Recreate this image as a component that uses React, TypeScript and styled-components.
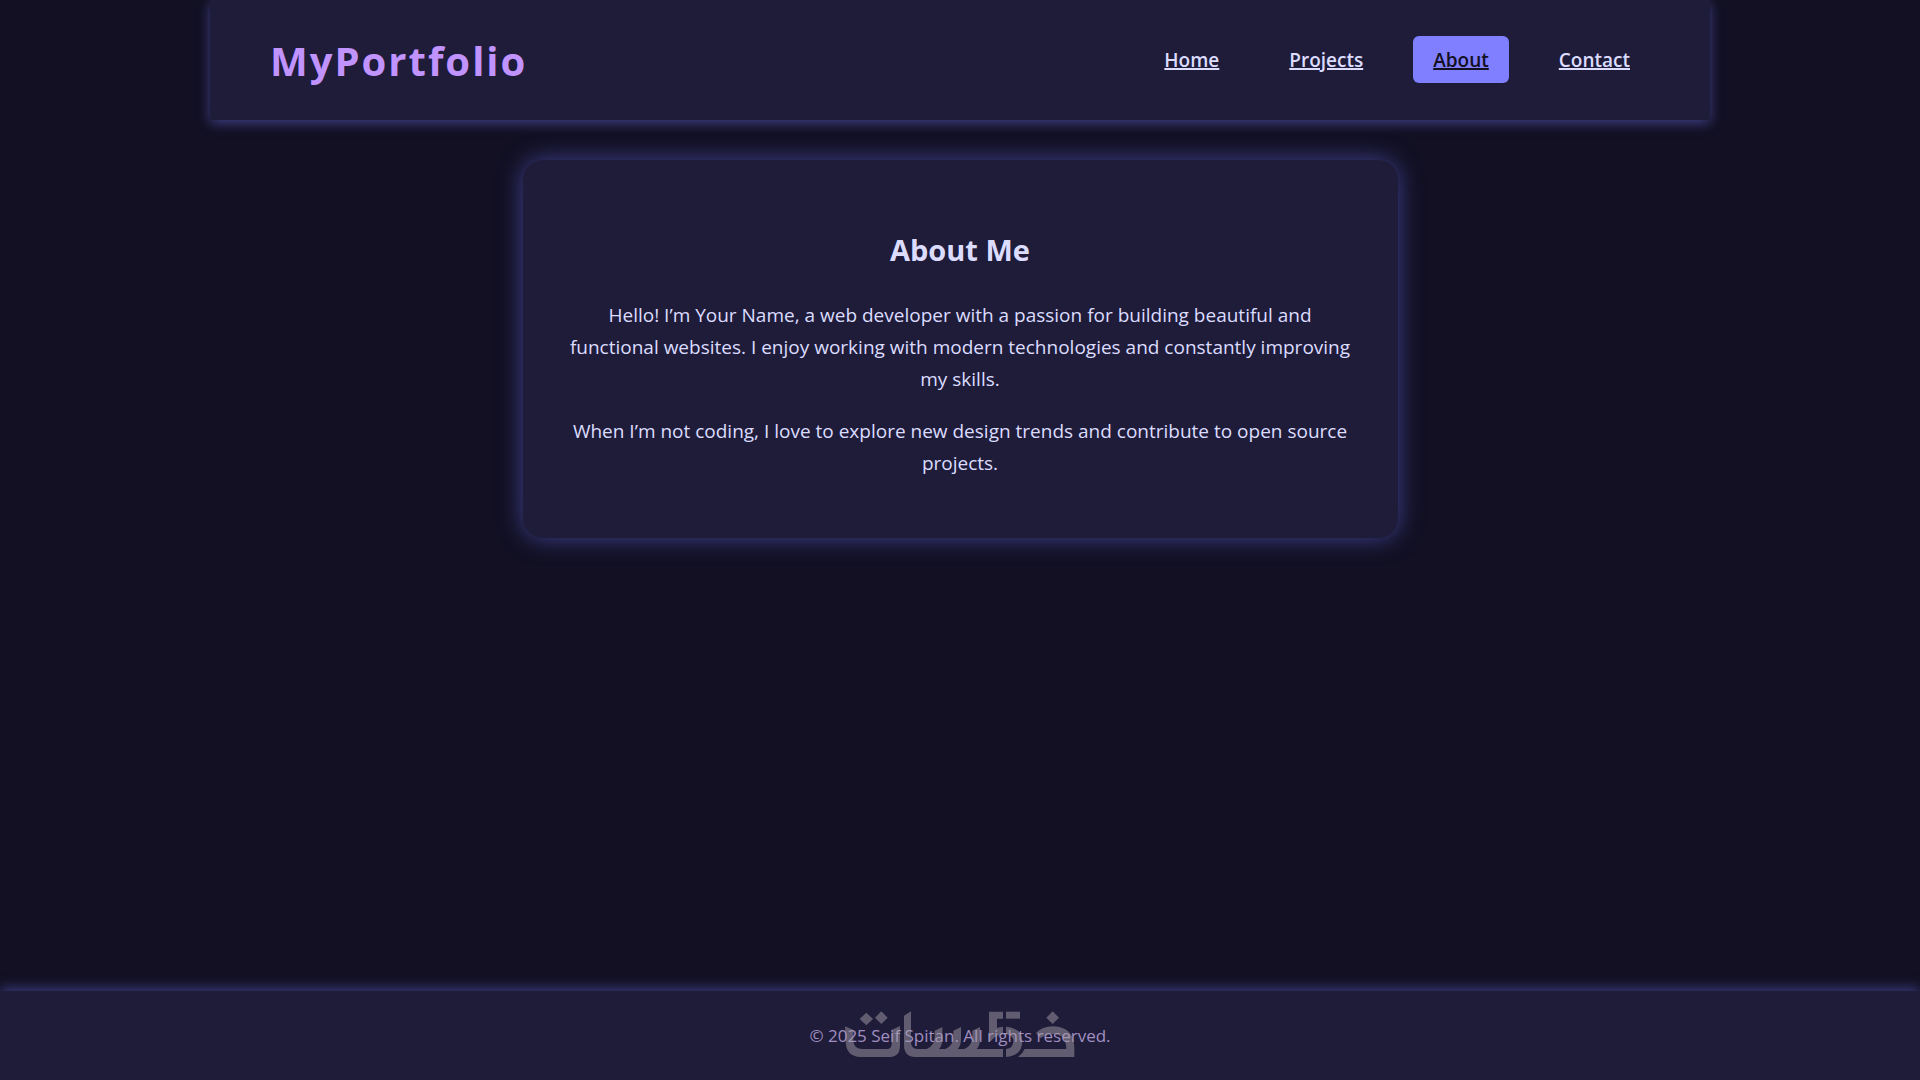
import React from "react";
import styled, { createGlobalStyle } from "styled-components";

const GlobalStyle = createGlobalStyle`
  *, *::before, *::after { box-sizing: border-box; }
  body {
    margin: 0;
    background: #121022;
    color: #dcdcff;
    font-family: "Open Sans", "Noto Sans", sans-serif;
  }
`;

const Page = styled.div`
  min-height: 100vh;
  display: flex;
  flex-direction: column;
  align-items: center;
`;

const Header = styled.header`
  width: 100%;
  max-width: 1500px;
  padding: 33px 60px 31px;
  display: flex;
  align-items: center;
  justify-content: space-between;
  background: #1f1c3a;
  box-shadow: 0 3px 12px rgba(120, 120, 255, 0.45);
`;

const Logo = styled.div`
  font-size: 40px;
  line-height: 56px;
  font-weight: 700;
  letter-spacing: 2px;
  color: #c093ff;
`;

const NavList = styled.ul`
  margin: 0 0 3px;
  padding: 0;
  display: flex;
  gap: 30px;
  list-style: none;
`;

const NavLink = styled.a<{ $active?: boolean }>`
  display: block;
  padding: 11px 20px 9px;
  border-radius: 6px;
  font-size: 19px;
  line-height: 27px;
  font-weight: 600;
  text-decoration-thickness: 2px;
  color: ${(p) => (p.$active ? "#121022" : "#dcdcff")};
  background: ${(p) => (p.$active ? "#7f7fff" : "transparent")};
`;

const Card = styled.main`
  width: calc(100% - 80px);
  max-width: 875px;
  margin: 40px 0;
  padding: 68px 40px 59px;
  border-radius: 20px;
  background: #1f1c3a;
  text-align: center;
  box-shadow: 0 0 25px rgba(112, 116, 255, 0.5);
`;

const Title = styled.h1`
  margin: 0 0 27px;
  font-size: 29px;
  line-height: 44px;
  font-weight: 700;
`;

const Paragraph = styled.p`
  margin: 0 0 20px;
  font-size: 19px;
  line-height: 32px;
  &:last-child { margin-bottom: 0; }
`;

const Footer = styled.footer`
  position: relative;
  width: 100%;
  margin-top: auto;
  padding: 32px 20px;
  background: #1f1c3a;
  color: #a08fc0;
  font-size: 17px;
  line-height: 25px;
  text-align: center;
  box-shadow: 0 -3px 12px rgba(120, 120, 255, 0.4);
`;

const Watermark = styled.svg`
  position: absolute;
  top: 20px;
  left: 50%;
  width: 232px;
  height: 47px;
  transform: translateX(-50%);
  fill: #a39ca6;
  opacity: 0.5;
  pointer-events: none;
`;

const links = ["Home", "Projects", "About", "Contact"];

function KhamsatMark() {
  return (
    <Watermark viewBox="162 124 696 141" aria-hidden="true">
      <path d="M229 129l20 19-20 19-20-19z" />
      <path d="M274 125l19 19-19 19-19-19z" />
      <path d="M165 170L190 181V210Q190 238 218 238H290Q305 238 305 222V181L330 169V228Q330 262 296 262H212Q167 262 167 212Z" />
      <path d="M342 138L363 125V218Q363 238 382 238H410Q434 228 434 202V183L457 172V208Q457 228 447 238H466Q490 228 490 202V183L513 172V208Q513 228 503 238H523Q547 228 547 202V183L570 172V208Q570 228 560 238H639V262H376Q342 262 342 226Z" />
      <path d="M597 126H639V147H621V175Q628 172 639 171V194Q616 196 603 214H597Z" />
      <path d="M648 126H690V147H648Z" />
      <path d="M648 171Q697 176 697 214Q697 258 648 262V238Q670 236 670 215Q670 197 648 194Z" />
      <path d="M788 125l19 19-19 19-19-19z" />
      <path d="M738 190Q756 170 790 170Q853 172 853 236V262H684Q698 252 704 238H829Q829 193 788 193Q766 193 752 206Z" />
    </Watermark>
  );
}

export default function App() {
  return (
    <Page>
      <GlobalStyle />
      <Header>
        <Logo>MyPortfolio</Logo>
        <nav>
          <NavList>
            {links.map((name) => (
              <li key={name}>
                <NavLink href={`#${name.toLowerCase()}`} $active={name === "About"}>{name}</NavLink>
              </li>
            ))}
          </NavList>
        </nav>
      </Header>
      <Card>
        <Title>About Me</Title>
        <Paragraph>
          Hello! I’m Your Name, a web developer with a passion for building beautiful and
          functional websites. I enjoy working with modern technologies and constantly improving
          my skills.
        </Paragraph>
        <Paragraph>
          When I’m not coding, I love to explore new design trends and contribute to open source
          projects.
        </Paragraph>
      </Card>
      <Footer>
        © 2025 Seif Spitan. All rights reserved.
        <KhamsatMark />
      </Footer>
    </Page>
  );
}
